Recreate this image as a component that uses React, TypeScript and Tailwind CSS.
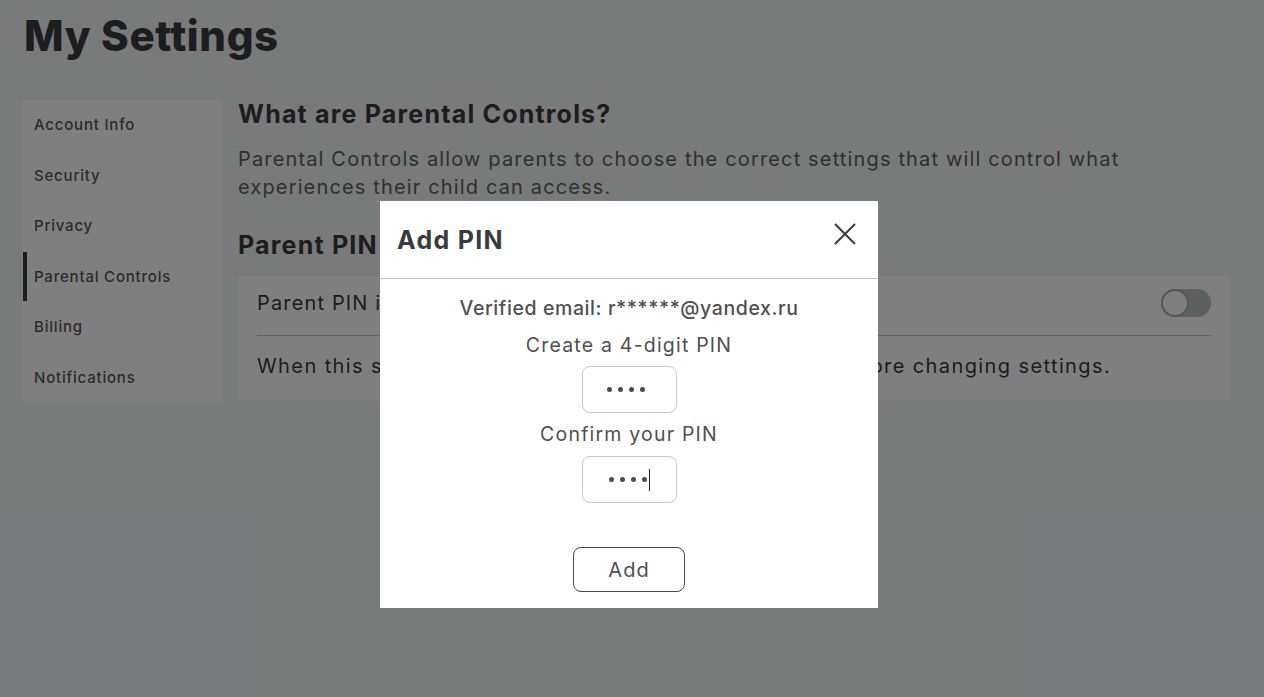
import React from "react";

const navItems = ["Account Info", "Security", "Privacy", "Parental Controls", "Billing", "Notifications"];

const PinInput = ({ caret }: { caret?: boolean }) => {
  return (
    <div className="w-[95px] h-[47px] border border-[#c9c9c9] rounded-lg flex items-center justify-center gap-[6px]">
      {[0, 1, 2, 3].map((i) => (
        <span key={i} className="w-[5px] h-[5px] rounded-full bg-[#4b4b4b]" />
      ))}
      {caret ? <span className="w-px h-[22px] bg-[#222] -ml-[4px]" /> : <span className="w-px" />}
    </div>
  );
};

const App = () => {
  return (
    <div className="relative min-h-[697px] bg-[#f2f4f5] text-[#393b3d] font-['Inter',sans-serif] overflow-hidden">
      <div className="px-[22px] pt-[12px]">
        <h1 className="pl-[2px] text-[42px] font-extrabold leading-[48px] tracking-[0.6px] text-[#393b3d]">My Settings</h1>
        <div className="flex gap-4 mt-[40px] pr-[12px]">
          <nav className="w-[200px] shrink-0 bg-white rounded-sm self-start">
            {navItems.map((item) => (
              <div key={item} className="relative h-[50.5px] flex items-center pl-3 text-[15px] font-medium tracking-[0.8px] text-[#575859]">
                {item === "Parental Controls" && (
                  <span className="absolute left-px top-0 bottom-[1px] w-1 bg-[#393b3d]" />
                )}
                {item}
              </div>
            ))}
          </nav>
          <main className="flex-1">
            <h2 className="-mt-[1px] text-[25px] font-bold leading-[30px] tracking-[1.2px] text-[#393b3d]">What are Parental Controls?</h2>
            <p className="mt-[16px] max-w-[900px] text-[20px] leading-[28px] tracking-[1.15px] text-[#606162]">
              Parental Controls allow parents to choose the correct settings that will control what experiences their child can access.
            </p>
            <h2 className="mt-[29px] text-[25px] font-bold leading-[30px] tracking-[1.2px] text-[#393b3d]">Parent PIN</h2>
            <div className="mt-[16px] bg-white rounded-sm px-[19px]">
              <div className="h-[60px] flex items-center justify-between border-b border-[#c3c4c5] pb-[5px]">
                <span className="text-[20px] tracking-[1.15px] text-[#393b3d]">Parent PIN is disabled</span>
                <span className="w-[50px] h-[28px] rounded-full bg-[#bdbebe] flex items-center">
                  <span className="w-[28px] h-[28px] rounded-full bg-white border-2 border-[#adaeae]" />
                </span>
              </div>
              <div className="h-[65px] flex items-center pb-[5px]">
                <span className="text-[20px] tracking-[1.4px] text-[#393b3d]">
                  When this setting is on, a 4-digit PIN will be required before changing settings.
                </span>
              </div>
            </div>
          </main>
        </div>
      </div>

      <div className="absolute inset-0 bg-black/50 flex items-start pl-[380px] pt-[201px]">
        <div className="w-[498px] h-[407px] bg-white flex flex-col">
          <div className="h-[78px] flex items-center justify-between pl-[17px] pr-[22px] border-b border-[#c8c8c8]">
            <span className="mt-[2px] text-[25px] font-bold tracking-[1.3px] text-[#393b3d]">Add PIN</span>
            <svg width="22" height="22" viewBox="0 0 22 22" className="-mt-[11px]" fill="none" stroke="#393b3d" strokeWidth="2">
              <path d="M1 1l20 20M21 1L1 21" />
            </svg>
          </div>
          <div className="flex flex-col items-center pt-[15px]">
            <p className="text-[19.5px] font-medium leading-[28px] tracking-[0.6px] text-[#4f5051]">Verified email: r******@yandex.ru</p>
            <p className="mt-[9px] text-[19.5px] leading-[28px] tracking-[1.2px] text-[#4f5051]">Create a 4-digit PIN</p>
            <div className="mt-[7px]"><PinInput /></div>
            <p className="mt-[7px] text-[19.5px] leading-[28px] tracking-[1.2px] text-[#4f5051]">Confirm your PIN</p>
            <div className="mt-[8px]"><PinInput caret /></div>
            <button className="mt-[44px] w-[112px] h-[45px] border border-[#4a4a4a] rounded-lg text-[20px] tracking-[1px] text-[#4f5051]">Add</button>
          </div>
        </div>
      </div>
    </div>
  );
};

export default App;
